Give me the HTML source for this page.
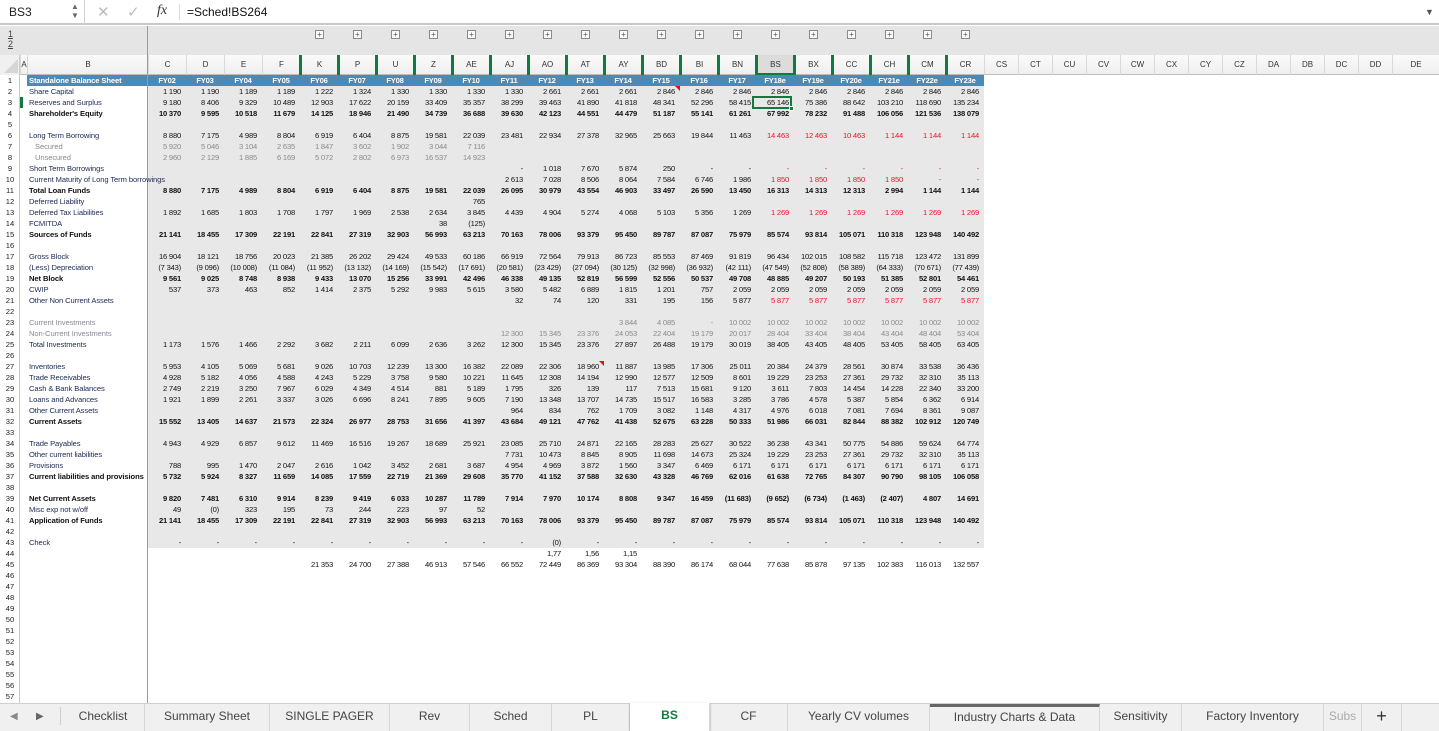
<!DOCTYPE html>
<html><head><meta charset="utf-8">
<style>
*{margin:0;padding:0;box-sizing:border-box}
body{width:1439px;height:731px;overflow:hidden;background:#fff;font-family:"Liberation Sans",Arial,sans-serif;position:relative;color:#111}
.abs{position:absolute}
#fb{left:0;top:0;width:1439px;height:25px;background:#fff;border-bottom:2px solid #c8c8c8}
#ol{left:0;top:26px;width:1439px;height:29px;background:#e5e5e5}
#ch{left:0;top:55px;width:1439px;height:20px;background:linear-gradient(#fafafa,#efefef);border-bottom:1px solid #bdbdbd}
.chl{position:absolute;top:55px;height:20px;line-height:20px;text-align:center;font-size:8px;color:#333;border-left:1px solid #d8d8d8}
.gb{position:absolute;top:55px;width:3px;height:20px;background:#127a3e}
.pl{position:absolute;top:30px;width:9px;height:9px;border:1px solid #8a8a8a;background:#fafafa;font-size:8px;line-height:7px;text-align:center;color:#555}
#gray{left:148px;top:86px;width:836px;height:462px;background:#e8e8e8}
#blue{left:27px;top:75px;width:957px;height:11px;background:#4a8ab8}
.r{position:absolute;left:148px;height:11px;display:flex;font-size:7.6px;line-height:11px;white-space:nowrap}
.r i{font-style:normal;width:38px;text-align:right;padding-right:5px;display:block;letter-spacing:-0.2px}
.r i.x{color:#f0102a}
.b{font-weight:bold}
.g{color:#8a8a8a}
.h i{color:#fff;font-weight:bold;text-align:center;padding:0}
.lb{position:absolute;left:29px;font-size:7.6px;line-height:11px;color:#1c2a55;white-space:nowrap;letter-spacing:-0.1px}
.rn{position:absolute;left:0;width:20px;text-align:center;font-size:7.6px;line-height:11px;color:#222}
#rh{left:0;top:75px;width:20px;height:628px;background:#fff;border-right:1px solid #c8c8c8}
#fz{left:147px;top:26px;width:1px;height:677px;background:#9a9a9a}
#tabs{left:0;top:703px;width:1439px;height:28px;background:#f0f0f0;border-top:1px solid #cfcfcf}
.tb{position:absolute;top:704px;height:27px;line-height:24px;font-size:12px;color:#444;text-align:center;border-right:1px solid #d6d6d6}
</style></head><body>
<div id="fb" class="abs"></div>
<div class="abs" style="left:9px;top:5px;font-size:12px;color:#222">BS3</div>
<div class="abs" style="left:71px;top:2px;font-size:8px;color:#666;line-height:9px">▲<br>▼</div>
<div class="abs" style="left:84px;top:0;width:1px;height:25px;background:#d0d0d0"></div>
<div class="abs" style="left:97px;top:3px;font-size:15px;color:#bbb">✕</div>
<div class="abs" style="left:127px;top:3px;font-size:15px;color:#bbb">✓</div>
<div class="abs" style="left:157px;top:3px;font-size:14px;color:#333;font-family:'Liberation Serif',serif;font-style:italic">fx</div>
<div class="abs" style="left:179px;top:4px;width:1px;height:16px;background:#ddd"></div>
<div class="abs" style="left:187px;top:5px;font-size:12px;color:#111">=Sched!BS264</div>
<div class="abs" style="left:1425px;top:7px;font-size:9px;color:#555">▼</div>
<div id="ol" class="abs"></div>
<div class="abs" style="left:8px;top:29px;font-size:9px;color:#444;line-height:10px;text-decoration:underline">1<br>2</div>
<div id="ch" class="abs"></div>
<div class="abs" style="left:0;top:55px;width:20px;height:20px;background:#f0f0f0;border-right:1px solid #ccc"></div>
<div class="abs" style="left:4px;top:59px;width:0;height:0;border-left:14px solid transparent;border-bottom:14px solid #d6d6d6"></div>
<div class="chl" style="left:20px;width:7px">A</div>
<div class="chl" style="left:27px;width:121px">B</div>
<div class="chl" style="left:148px;width:38px">C</div>
<div class="chl" style="left:186px;width:38px">D</div>
<div class="chl" style="left:224px;width:38px">E</div>
<div class="chl" style="left:262px;width:38px">F</div>
<div class="chl" style="left:300px;width:38px">K</div>
<div class="chl" style="left:338px;width:38px">P</div>
<div class="chl" style="left:376px;width:38px">U</div>
<div class="chl" style="left:414px;width:38px">Z</div>
<div class="chl" style="left:452px;width:38px">AE</div>
<div class="chl" style="left:490px;width:38px">AJ</div>
<div class="chl" style="left:528px;width:38px">AO</div>
<div class="chl" style="left:566px;width:38px">AT</div>
<div class="chl" style="left:604px;width:38px">AY</div>
<div class="chl" style="left:642px;width:38px">BD</div>
<div class="chl" style="left:680px;width:38px">BI</div>
<div class="chl" style="left:718px;width:38px">BN</div>
<div class="chl" style="left:756px;width:38px;background:#dcdcdc;border-bottom:2px solid #127a3e">BS</div>
<div class="chl" style="left:794px;width:38px">BX</div>
<div class="chl" style="left:832px;width:38px">CC</div>
<div class="chl" style="left:870px;width:38px">CH</div>
<div class="chl" style="left:908px;width:38px">CM</div>
<div class="chl" style="left:946px;width:38px">CR</div>
<div class="chl" style="left:984px;width:34px">CS</div>
<div class="chl" style="left:1018px;width:34px">CT</div>
<div class="chl" style="left:1052px;width:34px">CU</div>
<div class="chl" style="left:1086px;width:34px">CV</div>
<div class="chl" style="left:1120px;width:34px">CW</div>
<div class="chl" style="left:1154px;width:34px">CX</div>
<div class="chl" style="left:1188px;width:34px">CY</div>
<div class="chl" style="left:1222px;width:34px">CZ</div>
<div class="chl" style="left:1256px;width:34px">DA</div>
<div class="chl" style="left:1290px;width:34px">DB</div>
<div class="chl" style="left:1324px;width:34px">DC</div>
<div class="chl" style="left:1358px;width:34px">DD</div>
<div class="chl" style="left:1392px;width:47px">DE</div>
<div class="gb" style="left:299px"></div><div class="gb" style="left:337px"></div><div class="gb" style="left:375px"></div><div class="gb" style="left:413px"></div><div class="gb" style="left:451px"></div><div class="gb" style="left:489px"></div><div class="gb" style="left:527px"></div><div class="gb" style="left:565px"></div><div class="gb" style="left:603px"></div><div class="gb" style="left:641px"></div><div class="gb" style="left:679px"></div><div class="gb" style="left:717px"></div><div class="gb" style="left:755px"></div><div class="gb" style="left:793px"></div><div class="gb" style="left:831px"></div><div class="gb" style="left:869px"></div><div class="gb" style="left:907px"></div><div class="gb" style="left:945px"></div>
<div class="pl" style="left:315px">+</div><div class="pl" style="left:353px">+</div><div class="pl" style="left:391px">+</div><div class="pl" style="left:429px">+</div><div class="pl" style="left:467px">+</div><div class="pl" style="left:505px">+</div><div class="pl" style="left:543px">+</div><div class="pl" style="left:581px">+</div><div class="pl" style="left:619px">+</div><div class="pl" style="left:657px">+</div><div class="pl" style="left:695px">+</div><div class="pl" style="left:733px">+</div><div class="pl" style="left:771px">+</div><div class="pl" style="left:809px">+</div><div class="pl" style="left:847px">+</div><div class="pl" style="left:885px">+</div><div class="pl" style="left:923px">+</div><div class="pl" style="left:961px">+</div>

<div id="rh" class="abs"></div>
<div id="gray" class="abs"></div>
<div id="blue" class="abs"></div>
<div id="fz" class="abs"></div>
<div class="abs" style="left:20px;top:97px;width:3px;height:11px;background:#127a3e"></div>

<div class="rn" style="top:75px">1</div><div class="rn" style="top:86px">2</div><div class="rn" style="top:97px">3</div><div class="rn" style="top:108px">4</div><div class="rn" style="top:119px">5</div><div class="rn" style="top:130px">6</div><div class="rn" style="top:141px">7</div><div class="rn" style="top:152px">8</div><div class="rn" style="top:163px">9</div><div class="rn" style="top:174px">10</div><div class="rn" style="top:185px">11</div><div class="rn" style="top:196px">12</div><div class="rn" style="top:207px">13</div><div class="rn" style="top:218px">14</div><div class="rn" style="top:229px">15</div><div class="rn" style="top:240px">16</div><div class="rn" style="top:251px">17</div><div class="rn" style="top:262px">18</div><div class="rn" style="top:273px">19</div><div class="rn" style="top:284px">20</div><div class="rn" style="top:295px">21</div><div class="rn" style="top:306px">22</div><div class="rn" style="top:317px">23</div><div class="rn" style="top:328px">24</div><div class="rn" style="top:339px">25</div><div class="rn" style="top:350px">26</div><div class="rn" style="top:361px">27</div><div class="rn" style="top:372px">28</div><div class="rn" style="top:383px">29</div><div class="rn" style="top:394px">30</div><div class="rn" style="top:405px">31</div><div class="rn" style="top:416px">32</div><div class="rn" style="top:427px">33</div><div class="rn" style="top:438px">34</div><div class="rn" style="top:449px">35</div><div class="rn" style="top:460px">36</div><div class="rn" style="top:471px">37</div><div class="rn" style="top:482px">38</div><div class="rn" style="top:493px">39</div><div class="rn" style="top:504px">40</div><div class="rn" style="top:515px">41</div><div class="rn" style="top:526px">42</div><div class="rn" style="top:537px">43</div><div class="rn" style="top:548px">44</div><div class="rn" style="top:559px">45</div><div class="rn" style="top:570px">46</div><div class="rn" style="top:581px">47</div><div class="rn" style="top:592px">48</div><div class="rn" style="top:603px">49</div><div class="rn" style="top:614px">50</div><div class="rn" style="top:625px">51</div><div class="rn" style="top:636px">52</div><div class="rn" style="top:647px">53</div><div class="rn" style="top:658px">54</div><div class="rn" style="top:669px">55</div><div class="rn" style="top:680px">56</div><div class="rn" style="top:691px">57</div>

<div class="lb b" style="top:75px;color:#fff">Standalone Balance Sheet</div>
<div class="lb" style="top:86px">Share Capital</div>
<div class="lb" style="top:97px">Reserves and Surplus</div>
<div class="lb b" style="top:108px;color:#111">Shareholder's Equity</div>
<div class="lb" style="top:130px">Long Term Borrowing</div>
<div class="lb" style="top:141px;left:35px;color:#8a8a8a">Secured</div>
<div class="lb" style="top:152px;left:35px;color:#8a8a8a">Unsecured</div>
<div class="lb" style="top:163px">Short Term Borrowings</div>
<div class="lb" style="top:174px">Current Maturity of Long Term borrowings</div>
<div class="lb b" style="top:185px;color:#111">Total Loan Funds</div>
<div class="lb" style="top:196px">Deferred Liability</div>
<div class="lb" style="top:207px">Deferred Tax Liabilities</div>
<div class="lb" style="top:218px">FCMITDA</div>
<div class="lb b" style="top:229px;color:#111">Sources of Funds</div>
<div class="lb" style="top:251px">Gross Block</div>
<div class="lb" style="top:262px">(Less) Depreciation</div>
<div class="lb b" style="top:273px;color:#111">Net Block</div>
<div class="lb" style="top:284px">CWIP</div>
<div class="lb" style="top:295px">Other Non Current Assets</div>
<div class="lb" style="top:317px;color:#8a8a9a">Current Investments</div>
<div class="lb" style="top:328px;color:#8a8a9a">Non-Current Investments</div>
<div class="lb" style="top:339px">Total Investments</div>
<div class="lb" style="top:361px">Inventories</div>
<div class="lb" style="top:372px">Trade Receivables</div>
<div class="lb" style="top:383px">Cash &amp; Bank Balances</div>
<div class="lb" style="top:394px">Loans and Advances</div>
<div class="lb" style="top:405px">Other Current Assets</div>
<div class="lb b" style="top:416px;color:#111">Current Assets</div>
<div class="lb" style="top:438px">Trade Payables</div>
<div class="lb" style="top:449px">Other current liabilities</div>
<div class="lb" style="top:460px">Provisions</div>
<div class="lb b" style="top:471px;color:#111;width:119px;overflow:hidden">Current liabilities and provisions</div>
<div class="lb b" style="top:493px;color:#111">Net Current Assets</div>
<div class="lb" style="top:504px">Misc exp not w/off</div>
<div class="lb b" style="top:515px;color:#111">Application of Funds</div>
<div class="lb" style="top:537px">Check</div>

<div class="r h" style="top:75px"><i>FY02</i><i>FY03</i><i>FY04</i><i>FY05</i><i>FY06</i><i>FY07</i><i>FY08</i><i>FY09</i><i>FY10</i><i>FY11</i><i>FY12</i><i>FY13</i><i>FY14</i><i>FY15</i><i>FY16</i><i>FY17</i><i>FY18e</i><i>FY19e</i><i>FY20e</i><i>FY21e</i><i>FY22e</i><i>FY23e</i></div>
<div class="r" style="top:86px"><i>1 190</i><i>1 190</i><i>1 189</i><i>1 189</i><i>1 222</i><i>1 324</i><i>1 330</i><i>1 330</i><i>1 330</i><i>1 330</i><i>2 661</i><i>2 661</i><i>2 661</i><i>2 846</i><i>2 846</i><i>2 846</i><i>2 846</i><i>2 846</i><i>2 846</i><i>2 846</i><i>2 846</i><i>2 846</i></div>
<div class="r" style="top:97px"><i>9 180</i><i>8 406</i><i>9 329</i><i>10 489</i><i>12 903</i><i>17 622</i><i>20 159</i><i>33 409</i><i>35 357</i><i>38 299</i><i>39 463</i><i>41 890</i><i>41 818</i><i>48 341</i><i>52 296</i><i>58 415</i><i>65 146</i><i>75 386</i><i>88 642</i><i>103 210</i><i>118 690</i><i>135 234</i></div>
<div class="r b" style="top:108px"><i>10 370</i><i>9 595</i><i>10 518</i><i>11 679</i><i>14 125</i><i>18 946</i><i>21 490</i><i>34 739</i><i>36 688</i><i>39 630</i><i>42 123</i><i>44 551</i><i>44 479</i><i>51 187</i><i>55 141</i><i>61 261</i><i>67 992</i><i>78 232</i><i>91 488</i><i>106 056</i><i>121 536</i><i>138 079</i></div>
<div class="r" style="top:130px"><i>8 880</i><i>7 175</i><i>4 989</i><i>8 804</i><i>6 919</i><i>6 404</i><i>8 875</i><i>19 581</i><i>22 039</i><i>23 481</i><i>22 934</i><i>27 378</i><i>32 965</i><i>25 663</i><i>19 844</i><i>11 463</i><i class="x">14 463</i><i class="x">12 463</i><i class="x">10 463</i><i class="x">1 144</i><i class="x">1 144</i><i class="x">1 144</i></div>
<div class="r g" style="top:141px"><i>5 920</i><i>5 046</i><i>3 104</i><i>2 635</i><i>1 847</i><i>3 602</i><i>1 902</i><i>3 044</i><i>7 116</i></div>
<div class="r g" style="top:152px"><i>2 960</i><i>2 129</i><i>1 885</i><i>6 169</i><i>5 072</i><i>2 802</i><i>6 973</i><i>16 537</i><i>14 923</i></div>
<div class="r" style="top:163px"><i style="margin-left:342px">-</i><i>1 018</i><i>7 670</i><i>5 874</i><i>250</i><i>-</i><i>-</i><i class="x">-</i><i class="x">-</i><i class="x">-</i><i class="x">-</i><i class="x">-</i><i class="x">-</i></div>
<div class="r" style="top:174px"><i style="margin-left:342px">2 613</i><i>7 028</i><i>8 506</i><i>8 064</i><i>7 584</i><i>6 746</i><i>1 986</i><i class="x">1 850</i><i class="x">1 850</i><i class="x">1 850</i><i class="x">1 850</i><i class="x">-</i><i class="x">-</i></div>
<div class="r b" style="top:185px"><i>8 880</i><i>7 175</i><i>4 989</i><i>8 804</i><i>6 919</i><i>6 404</i><i>8 875</i><i>19 581</i><i>22 039</i><i>26 095</i><i>30 979</i><i>43 554</i><i>46 903</i><i>33 497</i><i>26 590</i><i>13 450</i><i>16 313</i><i>14 313</i><i>12 313</i><i>2 994</i><i>1 144</i><i>1 144</i></div>
<div class="r" style="top:196px"><i style="margin-left:304px">765</i></div>
<div class="r" style="top:207px"><i>1 892</i><i>1 685</i><i>1 803</i><i>1 708</i><i>1 797</i><i>1 969</i><i>2 538</i><i>2 634</i><i>3 845</i><i>4 439</i><i>4 904</i><i>5 274</i><i>4 068</i><i>5 103</i><i>5 356</i><i>1 269</i><i class="x">1 269</i><i class="x">1 269</i><i class="x">1 269</i><i class="x">1 269</i><i class="x">1 269</i><i class="x">1 269</i></div>
<div class="r" style="top:218px"><i style="margin-left:266px">38</i><i>(125)</i></div>
<div class="r b" style="top:229px"><i>21 141</i><i>18 455</i><i>17 309</i><i>22 191</i><i>22 841</i><i>27 319</i><i>32 903</i><i>56 993</i><i>63 213</i><i>70 163</i><i>78 006</i><i>93 379</i><i>95 450</i><i>89 787</i><i>87 087</i><i>75 979</i><i>85 574</i><i>93 814</i><i>105 071</i><i>110 318</i><i>123 948</i><i>140 492</i></div>
<div class="r" style="top:251px"><i>16 904</i><i>18 121</i><i>18 756</i><i>20 023</i><i>21 385</i><i>26 202</i><i>29 424</i><i>49 533</i><i>60 186</i><i>66 919</i><i>72 564</i><i>79 913</i><i>86 723</i><i>85 553</i><i>87 469</i><i>91 819</i><i>96 434</i><i>102 015</i><i>108 582</i><i>115 718</i><i>123 472</i><i>131 899</i></div>
<div class="r" style="top:262px"><i>(7 343)</i><i>(9 096)</i><i>(10 008)</i><i>(11 084)</i><i>(11 952)</i><i>(13 132)</i><i>(14 169)</i><i>(15 542)</i><i>(17 691)</i><i>(20 581)</i><i>(23 429)</i><i>(27 094)</i><i>(30 125)</i><i>(32 998)</i><i>(36 932)</i><i>(42 111)</i><i>(47 549)</i><i>(52 808)</i><i>(58 389)</i><i>(64 333)</i><i>(70 671)</i><i>(77 439)</i></div>
<div class="r b" style="top:273px"><i>9 561</i><i>9 025</i><i>8 748</i><i>8 938</i><i>9 433</i><i>13 070</i><i>15 256</i><i>33 991</i><i>42 496</i><i>46 338</i><i>49 135</i><i>52 819</i><i>56 599</i><i>52 556</i><i>50 537</i><i>49 708</i><i>48 885</i><i>49 207</i><i>50 193</i><i>51 385</i><i>52 801</i><i>54 461</i></div>
<div class="r" style="top:284px"><i>537</i><i>373</i><i>463</i><i>852</i><i>1 414</i><i>2 375</i><i>5 292</i><i>9 983</i><i>5 615</i><i>3 580</i><i>5 482</i><i>6 889</i><i>1 815</i><i>1 201</i><i>757</i><i>2 059</i><i>2 059</i><i>2 059</i><i>2 059</i><i>2 059</i><i>2 059</i><i>2 059</i></div>
<div class="r" style="top:295px"><i style="margin-left:342px">32</i><i>74</i><i>120</i><i>331</i><i>195</i><i>156</i><i>5 877</i><i class="x">5 877</i><i class="x">5 877</i><i class="x">5 877</i><i class="x">5 877</i><i class="x">5 877</i><i class="x">5 877</i></div>
<div class="r g" style="top:317px"><i style="margin-left:456px">3 844</i><i>4 085</i><i>-</i><i>10 002</i><i>10 002</i><i>10 002</i><i>10 002</i><i>10 002</i><i>10 002</i><i>10 002</i></div>
<div class="r g" style="top:328px"><i style="margin-left:342px">12 300</i><i>15 345</i><i>23 376</i><i>24 053</i><i>22 404</i><i>19 179</i><i>20 017</i><i>28 404</i><i>33 404</i><i>38 404</i><i>43 404</i><i>48 404</i><i>53 404</i></div>
<div class="r" style="top:339px"><i>1 173</i><i>1 576</i><i>1 466</i><i>2 292</i><i>3 682</i><i>2 211</i><i>6 099</i><i>2 636</i><i>3 262</i><i>12 300</i><i>15 345</i><i>23 376</i><i>27 897</i><i>26 488</i><i>19 179</i><i>30 019</i><i>38 405</i><i>43 405</i><i>48 405</i><i>53 405</i><i>58 405</i><i>63 405</i></div>
<div class="r" style="top:361px"><i>5 953</i><i>4 105</i><i>5 069</i><i>5 681</i><i>9 026</i><i>10 703</i><i>12 239</i><i>13 300</i><i>16 382</i><i>22 089</i><i>22 306</i><i>18 960</i><i>11 887</i><i>13 985</i><i>17 306</i><i>25 011</i><i>20 384</i><i>24 379</i><i>28 561</i><i>30 874</i><i>33 538</i><i>36 436</i></div>
<div class="r" style="top:372px"><i>4 928</i><i>5 182</i><i>4 056</i><i>4 588</i><i>4 243</i><i>5 229</i><i>3 758</i><i>9 580</i><i>10 221</i><i>11 645</i><i>12 308</i><i>14 194</i><i>12 990</i><i>12 577</i><i>12 509</i><i>8 601</i><i>19 229</i><i>23 253</i><i>27 361</i><i>29 732</i><i>32 310</i><i>35 113</i></div>
<div class="r" style="top:383px"><i>2 749</i><i>2 219</i><i>3 250</i><i>7 967</i><i>6 029</i><i>4 349</i><i>4 514</i><i>881</i><i>5 189</i><i>1 795</i><i>326</i><i>139</i><i>117</i><i>7 513</i><i>15 681</i><i>9 120</i><i>3 611</i><i>7 803</i><i>14 454</i><i>14 228</i><i>22 340</i><i>33 200</i></div>
<div class="r" style="top:394px"><i>1 921</i><i>1 899</i><i>2 261</i><i>3 337</i><i>3 026</i><i>6 696</i><i>8 241</i><i>7 895</i><i>9 605</i><i>7 190</i><i>13 348</i><i>13 707</i><i>14 735</i><i>15 517</i><i>16 583</i><i>3 285</i><i>3 786</i><i>4 578</i><i>5 387</i><i>5 854</i><i>6 362</i><i>6 914</i></div>
<div class="r" style="top:405px"><i style="margin-left:342px">964</i><i>834</i><i>762</i><i>1 709</i><i>3 082</i><i>1 148</i><i>4 317</i><i>4 976</i><i>6 018</i><i>7 081</i><i>7 694</i><i>8 361</i><i>9 087</i></div>
<div class="r b" style="top:416px"><i>15 552</i><i>13 405</i><i>14 637</i><i>21 573</i><i>22 324</i><i>26 977</i><i>28 753</i><i>31 656</i><i>41 397</i><i>43 684</i><i>49 121</i><i>47 762</i><i>41 438</i><i>52 675</i><i>63 228</i><i>50 333</i><i>51 986</i><i>66 031</i><i>82 844</i><i>88 382</i><i>102 912</i><i>120 749</i></div>
<div class="r" style="top:438px"><i>4 943</i><i>4 929</i><i>6 857</i><i>9 612</i><i>11 469</i><i>16 516</i><i>19 267</i><i>18 689</i><i>25 921</i><i>23 085</i><i>25 710</i><i>24 871</i><i>22 165</i><i>28 283</i><i>25 627</i><i>30 522</i><i>36 238</i><i>43 341</i><i>50 775</i><i>54 886</i><i>59 624</i><i>64 774</i></div>
<div class="r" style="top:449px"><i style="margin-left:342px">7 731</i><i>10 473</i><i>8 845</i><i>8 905</i><i>11 698</i><i>14 673</i><i>25 324</i><i>19 229</i><i>23 253</i><i>27 361</i><i>29 732</i><i>32 310</i><i>35 113</i></div>
<div class="r" style="top:460px"><i>788</i><i>995</i><i>1 470</i><i>2 047</i><i>2 616</i><i>1 042</i><i>3 452</i><i>2 681</i><i>3 687</i><i>4 954</i><i>4 969</i><i>3 872</i><i>1 560</i><i>3 347</i><i>6 469</i><i>6 171</i><i>6 171</i><i>6 171</i><i>6 171</i><i>6 171</i><i>6 171</i><i>6 171</i></div>
<div class="r b" style="top:471px"><i>5 732</i><i>5 924</i><i>8 327</i><i>11 659</i><i>14 085</i><i>17 559</i><i>22 719</i><i>21 369</i><i>29 608</i><i>35 770</i><i>41 152</i><i>37 588</i><i>32 630</i><i>43 328</i><i>46 769</i><i>62 016</i><i>61 638</i><i>72 765</i><i>84 307</i><i>90 790</i><i>98 105</i><i>106 058</i></div>
<div class="r b" style="top:493px"><i>9 820</i><i>7 481</i><i>6 310</i><i>9 914</i><i>8 239</i><i>9 419</i><i>6 033</i><i>10 287</i><i>11 789</i><i>7 914</i><i>7 970</i><i>10 174</i><i>8 808</i><i>9 347</i><i>16 459</i><i>(11 683)</i><i>(9 652)</i><i>(6 734)</i><i>(1 463)</i><i>(2 407)</i><i>4 807</i><i>14 691</i></div>
<div class="r" style="top:504px"><i>49</i><i>(0)</i><i>323</i><i>195</i><i>73</i><i>244</i><i>223</i><i>97</i><i>52</i></div>
<div class="r b" style="top:515px"><i>21 141</i><i>18 455</i><i>17 309</i><i>22 191</i><i>22 841</i><i>27 319</i><i>32 903</i><i>56 993</i><i>63 213</i><i>70 163</i><i>78 006</i><i>93 379</i><i>95 450</i><i>89 787</i><i>87 087</i><i>75 979</i><i>85 574</i><i>93 814</i><i>105 071</i><i>110 318</i><i>123 948</i><i>140 492</i></div>
<div class="r" style="top:537px"><i>-</i><i>-</i><i>-</i><i>-</i><i>-</i><i>-</i><i>-</i><i>-</i><i>-</i><i>-</i><i>(0)</i><i>-</i><i>-</i><i>-</i><i>-</i><i>-</i><i>-</i><i>-</i><i>-</i><i>-</i><i>-</i><i>-</i></div>
<div class="r" style="top:548px"><i style="margin-left:380px">1,77</i><i>1,56</i><i>1,15</i></div>
<div class="r" style="top:559px"><i style="margin-left:152px">21 353</i><i>24 700</i><i>27 388</i><i>46 913</i><i>57 546</i><i>66 552</i><i>72 449</i><i>86 369</i><i>93 304</i><i>88 390</i><i>86 174</i><i>68 044</i><i>77 638</i><i>85 878</i><i>97 135</i><i>102 383</i><i>116 013</i><i>132 557</i></div>

<div class="abs" style="left:752px;top:96px;width:40px;height:13px;border:2px solid #127a3e"></div>
<div class="abs" style="left:789px;top:106px;width:5px;height:5px;background:#127a3e;border:1px solid #fff"></div>
<div class="abs" style="left:675px;top:86px;width:0;height:0;border-left:5px solid transparent;border-top:5px solid #e0101a"></div>
<div class="abs" style="left:599px;top:361px;width:0;height:0;border-left:5px solid transparent;border-top:5px solid #e0101a"></div>

<div id="tabs" class="abs"></div>
<div class="abs" style="left:10px;top:711px;font-size:10px;color:#888">◀</div>
<div class="abs" style="left:36px;top:711px;font-size:10px;color:#666">▶</div>
<div class="abs" style="left:60px;top:707px;width:1px;height:18px;background:#d0d0d0"></div>
<div class="tb" style="left:62px;width:83px">Checklist</div>
<div class="tb" style="left:145px;width:125px">Summary Sheet</div>
<div class="tb" style="left:270px;width:120px">SINGLE PAGER</div>
<div class="tb" style="left:390px;width:80px">Rev</div>
<div class="tb" style="left:470px;width:82px">Sched</div>
<div class="tb" style="left:552px;width:78px">PL</div>
<div class="tb" style="left:630px;width:80px;background:#fff;color:#127a3e;font-weight:bold;top:703px;height:28px;box-shadow:0 1px 2px #999">BS</div>
<div class="tb" style="left:710px;width:78px">CF</div>
<div class="tb" style="left:788px;width:142px">Yearly CV volumes</div>
<div class="tb" style="left:930px;width:170px;border-top:3px solid #666;line-height:21px">Industry Charts &amp; Data</div>
<div class="tb" style="left:1100px;width:82px">Sensitivity</div>
<div class="tb" style="left:1182px;width:142px">Factory Inventory</div>
<div class="tb" style="left:1324px;width:38px;color:#aaa;overflow:hidden">Subs</div>
<div class="tb" style="left:1362px;width:40px;font-size:18px;color:#333">+</div>
</body></html>
